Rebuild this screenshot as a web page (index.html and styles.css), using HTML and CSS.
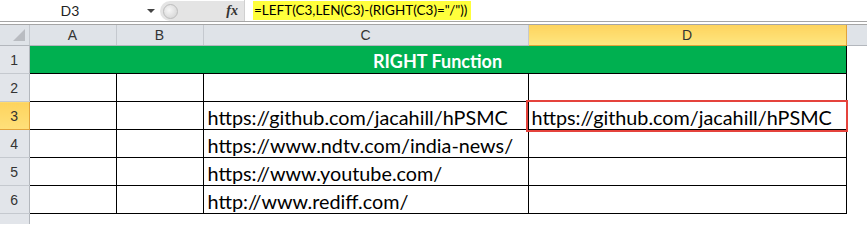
FILE: index.html
```html
<!DOCTYPE html>
<html lang="en">
<head>
	<meta charset="UTF-8">
	<title>RIGHT Function</title>
	<link rel="stylesheet" href="styles.css">
</head>
<body>
	<div class="fbar">
		<div class="namebox">
			<span class="ref">D3</span>
			<span class="drop"></span>
		</div>
		<div class="tools">
			<span class="grip"></span>
			<span class="fx">fx</span>
		</div>
		<div class="formula"><span class="hl">=LEFT(C3,LEN(C3)-(RIGHT(C3)="/"))</span></div>
	</div>
	<div class="gap"></div>
	<table class="sheet" cellspacing="0">
		<colgroup>
			<col class="c0"><col class="ca"><col class="cb"><col class="cc"><col class="cd"><col>
		</colgroup>
		<tr class="head">
			<th class="corner"><span class="tri"></span></th>
			<th>A</th>
			<th>B</th>
			<th>C</th>
			<th class="sel">D</th>
			<th class="rest"></th>
		</tr>
		<tr>
			<th class="rn">1</th>
			<td class="title" colspan="4">RIGHT Function</td>
			<td class="blank"></td>
		</tr>
		<tr>
			<th class="rn">2</th>
			<td></td><td></td><td></td><td></td>
			<td class="blank"></td>
		</tr>
		<tr>
			<th class="rn sel">3</th>
			<td></td><td></td>
			<td>https://github.com/jacahill/hPSMC</td>
			<td class="active">https://github.com/jacahill/hPSMC</td>
			<td class="blank"></td>
		</tr>
		<tr>
			<th class="rn">4</th>
			<td></td><td></td>
			<td>https://www.ndtv.com/india-news/</td>
			<td></td>
			<td class="blank"></td>
		</tr>
		<tr>
			<th class="rn">5</th>
			<td></td><td></td>
			<td>https://www.youtube.com/</td>
			<td></td>
			<td class="blank"></td>
		</tr>
		<tr>
			<th class="rn">6</th>
			<td></td><td></td>
			<td>http://www.rediff.com/</td>
			<td></td>
			<td class="blank"></td>
		</tr>
		<tr class="last">
			<th class="rn"></th>
			<td class="blank"></td><td class="blank"></td><td class="blank"></td><td class="blank"></td><td class="blank"></td>
		</tr>
	</table>
</body>
</html>
```
FILE: styles.css
```css
body{
	margin: 0;
	background: #fff;
	font-family: Lato, "Liberation Sans", sans-serif;
	overflow: hidden;
	height: 226px;
}
.fbar{
	display: flex;
	height: 21px;
	border-bottom: 1px solid #a5a5a5;
	background: #fff;
}
.namebox{
	width: 160px;
	display: flex;
	align-items: center;
}
.ref{
	width: 140px;
	text-align: center;
	font-size: 14px;
	color: #222;
}
.drop{
	width: 0;
	height: 0;
	border-left: 4px solid transparent;
	border-right: 4px solid transparent;
	border-top: 4px solid #444;
	margin-left: 7px;
}
.tools{
	width: 84px;
	display: flex;
	align-items: center;
	justify-content: space-between;
	background: #e4e4e4;
	border-radius: 11px 0 0 11px;
	margin-top: 1px;
	height: 20px;
	padding-right: 6px;
	box-sizing: border-box;
}
.grip{
	width: 13px;
	height: 13px;
	margin-left: 3px;
	border-radius: 50%;
	background: radial-gradient(circle at 40% 40%, #f7f7f7, #cfcfcf);
	border: 1px solid #bdbdbd;
}
.fx{
	font-family: "Liberation Serif", serif;
	font-style: italic;
	font-weight: bold;
	font-size: 14px;
	color: #333;
}
.formula{
	flex: 1;
	display: flex;
	align-items: center;
	padding-left: 8px;
	border-left: 1px solid #d0d0d0;
}
.hl{
	background: #ffff3c;
	font-size: 13.5px;
	line-height: 19px;
	padding: 0 4px 0 1px;
	color: #000;
}
.gap{
	height: 2px;
	border-bottom: 1px solid #a5a5a5;
}
.sheet{
	border-collapse: collapse;
	table-layout: fixed;
	width: 867px;
}
.c0{ width: 29px; }
.ca{ width: 87px; }
.cb{ width: 87px; }
.cc{ width: 325px; }
.cd{ width: 318px; }
.head th{
	height: 20px;
	padding: 0;
	background: #dfe3e8;
	border-right: 1px solid #c5c9cf;
	border-bottom: 1px solid #b3b7bd;
	font-family: "Liberation Sans", sans-serif;
	font-weight: normal;
	font-size: 14px;
	color: #333;
}
.head th.sel{
	background: linear-gradient(#fdd35d, #ffe680);
	border-right: 1px solid #e2a33b;
	border-bottom: 1px solid #e2a33b;
	border-left: 1px solid #e2a33b;
}
.head th.rest{
	border-right: none;
}
.corner{
	position: relative;
}
.tri{
	position: absolute;
	right: 4px;
	bottom: 4px;
	width: 0;
	height: 0;
	border-left: 12px solid transparent;
	border-bottom: 12px solid #b9bcc1;
}
.rn{
	height: 27px;
	padding: 0;
	background: #e2e5ea;
	border-bottom: 1px solid #c5c9cf;
	border-right: 1px solid #b3b7bd;
	font-family: "Liberation Sans", sans-serif;
	font-weight: normal;
	font-size: 14px;
	color: #333;
}
.rn.sel{
	background: linear-gradient(#fdd35d, #ffe07a);
	border-right: 1px solid #e2a33b;
	border-bottom: 1px solid #e2a33b;
}
td{
	border: 1px solid #000;
	padding: 2px 4px 0;
	font-size: 19.8px;
	color: #000;
	white-space: nowrap;
	overflow: hidden;
	line-height: 24px;
}
td.blank{
	border: none;
	border-left: 1px solid #000;
}
.last th.rn{
	height: 10px;
	border-bottom: none;
}
.last td.blank{
	border: none;
	border-top: 1px solid #000;
}
.last td.blank:last-child{
	border-top: none;
}
.title{
	background: #00b050;
	color: #fff;
	font-weight: bold;
	text-align: center;
	font-size: 18px;
	border-left: none;
	border-top: none;
}
td.active{
	position: relative;
	overflow: visible;
	padding-left: 3px;
}
.active::after{
	content: "";
	position: absolute;
	left: -3px;
	top: -2px;
	right: -2px;
	bottom: -3px;
	border: 2px solid #e5433c;
}
```
